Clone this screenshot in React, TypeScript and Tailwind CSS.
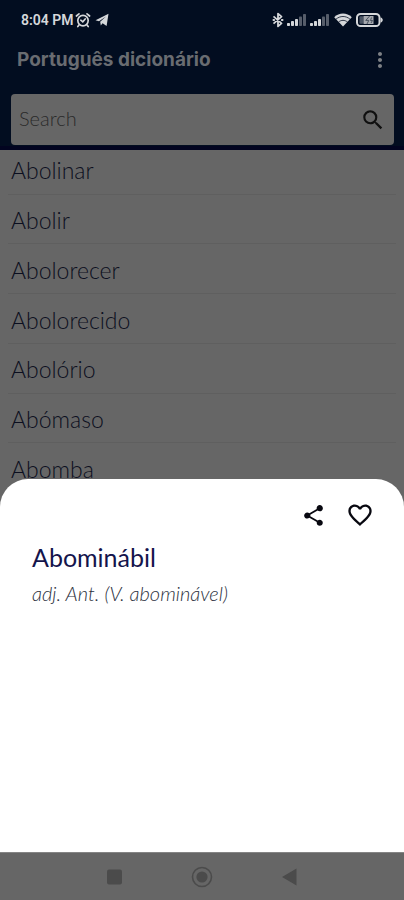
import { MdFavoriteBorder, MdMoreVert, MdSearch, MdShare } from "react-icons/md";

const words = ["Abolinar", "Abolir", "Abolorecer", "Abolorecido", "Abolório", "Abómaso", "Abomba"];

const AlarmIcon = () => (
  <svg viewBox="0 0 16 16" className="h-4 w-4" fill="none" stroke="currentColor" strokeWidth="1.7" strokeLinecap="round">
    <circle cx="8" cy="8.6" r="5.2" />
    <path d="M1.4 4 4 1.8M14.6 4 12 1.8M3.8 13.2l-1 1.3M12.2 13.2l1 1.3M5.8 8.2l2 1.6 2.4-2.8" />
  </svg>
);

const TelegramIcon = () => (
  <svg viewBox="0 0 14 14" className="h-3.5 w-3.5" fill="currentColor">
    <path d="M.5 7.2 13.5.8 11.6 13 7.6 10.2 5.8 12.6 5.2 8.8 11 3.6 4 8.2Z" />
  </svg>
);

const BluetoothIcon = () => (
  <svg viewBox="0 0 12 16" className="h-4 w-3" fill="none" stroke="currentColor" strokeWidth="1.8" strokeLinejoin="round">
    <path d="M1.5 4.4 9.5 11.4 6 14.4V1.6L9.5 4.6 1.5 11.6" />
    <path d="M1.4 8h.8M9.8 8h.8" strokeLinecap="round" />
  </svg>
);

const SignalIcon = () => (
  <svg viewBox="0 0 20 12" className="h-3 w-5" fill="currentColor">
    <rect x="0" y="9" width="3" height="3" rx="0.8" />
    <rect x="4" y="7" width="3" height="5" rx="0.8" />
    <rect x="8" y="5" width="3" height="7" rx="0.8" />
    <rect x="12" y="2.5" width="3" height="9.5" rx="0.8" opacity="0.4" />
    <rect x="16" y="0" width="3" height="12" rx="0.8" opacity="0.4" />
  </svg>
);

const WifiIcon = () => (
  <svg viewBox="0 0 18 14" className="h-3.5 w-[18px]">
    <path d="M9 13.6.2 4.2C5-.6 13-.6 17.8 4.2Z" fill="currentColor" />
    <path d="M2 6.2c4-3.6 10-3.6 14 0M4.6 9c2.6-2.2 6.2-2.2 8.8 0" fill="none" stroke="#020d20" strokeWidth="0.8" />
  </svg>
);

const BatteryIcon = () => (
  <svg viewBox="0 0 27 14" className="h-3.5 w-[27px]">
    <rect x="1" y="1" width="22.5" height="12" rx="3.6" fill="#020d20" stroke="currentColor" strokeWidth="2" />
    <path d="M24.5 4.5c3 .6 3 4.4 0 5Z" fill="currentColor" />
    <rect x="3.5" y="3.2" width="4" height="7.6" rx="1" fill="#4b5564" />
    <rect x="7.5" y="3" width="10" height="8" fill="#a4a7ad" />
    <path d="M13.6 3 9.8 7.4h3L11 11M15.5 4.5l-1 3h2L15 10" fill="none" stroke="#404856" strokeWidth="0.9" />
  </svg>
);

const StatusBar = () => (
  <div className="flex h-10 items-center justify-between px-[21px] text-[#d5d7da]">
    <div className="flex items-center">
      <span className="font-[Roboto,sans-serif] text-sm font-semibold">8:04 PM</span>
      <span className="ml-px">
        <AlarmIcon />
      </span>
      <span className="ml-1">
        <TelegramIcon />
      </span>
    </div>
    <div className="flex items-center gap-1">
      <div className="flex items-center gap-[3px]">
        <BluetoothIcon />
        <SignalIcon />
        <SignalIcon />
      </div>
      <WifiIcon />
      <BatteryIcon />
    </div>
  </div>
);

const Header = () => (
  <header className="relative z-10 h-[150px] border-b-4 border-[#020420] bg-[#020d20]">
    <StatusBar />
    <div className="flex h-10 items-center justify-between pr-3 pl-[17px]">
      <h1 className="font-[Inter,sans-serif] text-[19px] font-bold text-[#696c71]">Português dicionário</h1>
      <button type="button" aria-label="Menu" className="text-[#7d8085]">
        <MdMoreVert size={24} />
      </button>
    </div>
    <form className="mx-[11px] mt-3.5 mr-2.5 flex h-[51px] items-center rounded bg-[#666] pr-2 pl-2">
      <input
        type="text"
        aria-label="Search"
        placeholder="Search"
        className="h-12 min-w-0 flex-1 bg-transparent pb-1 font-[Lato,sans-serif] text-xl font-light text-[#222] outline-none placeholder:text-[#2a2a2a]"
      />
      <button type="button" aria-label="Search words" className="text-[#101010]">
        <MdSearch size={26} />
      </button>
    </form>
  </header>
);

const WordSheet = () => (
  <section className="relative z-10 -mt-[14px] flex-1 rounded-t-[28px] bg-white px-8 pt-6">
    <div className="-mr-0.5 flex h-6 items-center justify-end gap-5 text-[#080810]">
      <button type="button" aria-label="Share">
        <MdShare size={25} />
      </button>
      <button type="button" aria-label="Favorite">
        <MdFavoriteBorder size={28} />
      </button>
    </div>
    <h2 className="mt-3.5 text-[25px] leading-8 text-[#14144c]">Abominábil</h2>
    <p className="mt-2 text-xl leading-6 font-light text-[#2c3140] italic">adj. Ant. (V. abominável)</p>
  </section>
);

const NavBar = () => (
  <nav className="flex h-12 items-center justify-center gap-16 border-t border-[#858585] bg-[#666] text-[#4b4b4b]">
    <button type="button" aria-label="Recent apps">
      <svg viewBox="0 0 24 24" className="h-6 w-6" fill="currentColor">
        <rect x="5" y="4.5" width="15" height="15" rx="2" />
      </svg>
    </button>
    <button type="button" aria-label="Home">
      <svg viewBox="0 0 24 24" className="h-6 w-6">
        <circle cx="12" cy="12" r="9.5" fill="none" stroke="currentColor" strokeWidth="1.6" />
        <circle cx="12" cy="12" r="5.6" fill="currentColor" />
      </svg>
    </button>
    <button type="button" aria-label="Back">
      <svg viewBox="0 0 24 24" className="h-6 w-6" fill="currentColor">
        <path d="M4 12 18.5 3.5v17Z" />
      </svg>
    </button>
  </nav>
);

const App = () => {
  return (
    <div className="flex min-h-screen flex-col overflow-hidden bg-[#666] font-[Lato,sans-serif]">
      <Header />
      <ul className="-mt-[5px] flex h-[348px] flex-col px-2">
        {words.map((word) => (
          <li key={word} className="flex flex-1 items-center border-b border-[#5f5f5f] pt-0.5 pl-[3px]">
            <a href="#" className="text-[23px] leading-7 font-light text-[#0c0f20]">
              {word}
            </a>
          </li>
        ))}
      </ul>
      <WordSheet />
      <NavBar />
    </div>
  );
};

export default App;
